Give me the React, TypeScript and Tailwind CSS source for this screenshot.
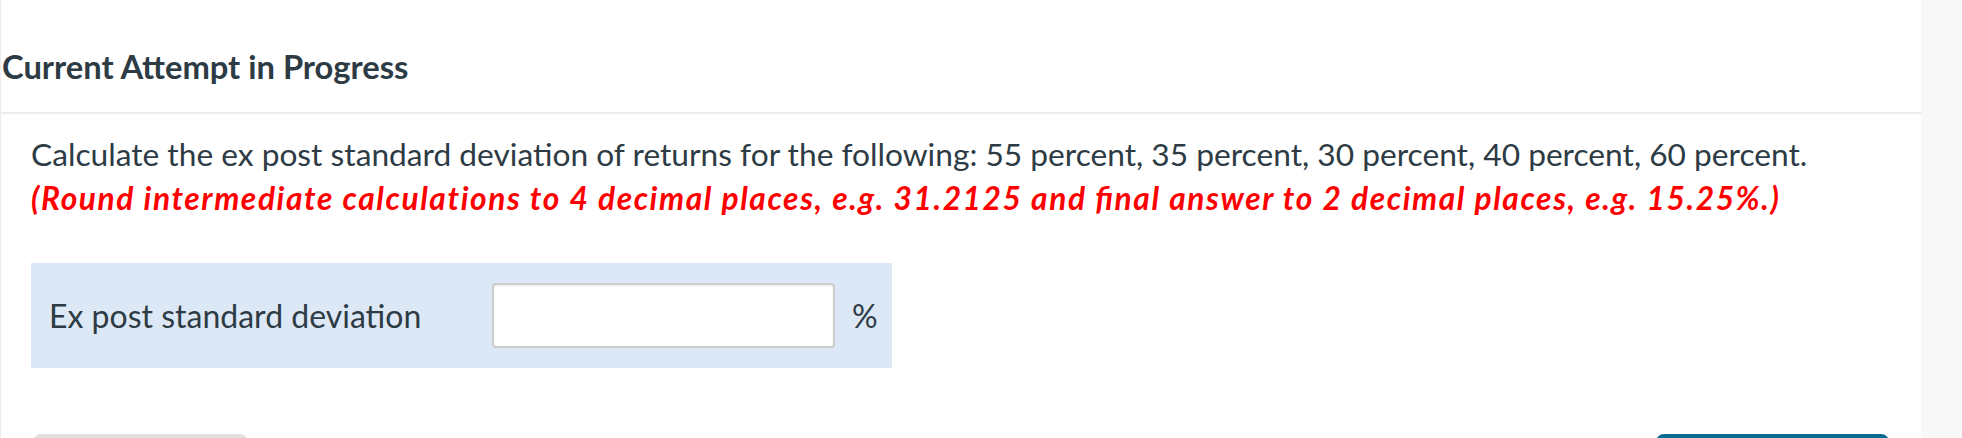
import React from "react";

export default function App() {
  return (
    <div
      className="flex h-[438px] w-[1962px] overflow-hidden bg-[#f8f8f8]"
      style={{ fontFamily: "Lato, 'Noto Sans', sans-serif" }}
    >
      <div className="flex w-[1921px] shrink-0 flex-col border-l border-[#ececec] bg-white text-[#2d3b45]">
        <div className="border-b-2 border-[#ececec] pb-[25px] pl-[1px] pt-[47px]">
          <h2 className="text-[32.7px] font-bold leading-[40px]">
            Current Attempt in Progress
          </h2>
        </div>
        <div className="pl-[30px] pt-[18px]">
          <p className="whitespace-nowrap text-[31.7px] leading-[44px]">
            Calculate the ex post standard deviation of returns for the following: 55 percent, 35 percent, 30 percent, 40 percent, 60 percent.
          </p>
          <p className="whitespace-nowrap text-[31.7px] font-bold italic leading-[44px] tracking-[1.6px] text-[#ff0000]">
            (Round intermediate calculations to 4 decimal places, e.g. 31.2125 and ﬁnal answer to 2 decimal places, e.g. 15.25%.)
          </p>
          <div className="mt-[43px] flex h-[105px] w-[861px] items-center bg-[#dde8f6] pl-[18px]">
            <span className="w-[443px] text-[32px] leading-[44px]">Ex post standard deviation</span>
            <div className="h-[65px] w-[343px] rounded-[4px] border-2 border-[#cccccc] bg-white shadow-[inset_0_1px_2px_rgba(0,0,0,0.08)]" />
            <span className="ml-[17px] text-[32px] leading-[44px]">%</span>
          </div>
          <div className="mt-[66px] flex items-start justify-between pr-[32px]">
            <div className="ml-[2px] h-[60px] w-[215px] rounded-[8px] bg-[#e0e0e0]" />
            <div className="h-[60px] w-[233px] rounded-[8px] bg-[#0a6a8e]" />
          </div>
        </div>
      </div>
      <div className="flex-1 bg-[#f8f8f8]" />
    </div>
  );
}
